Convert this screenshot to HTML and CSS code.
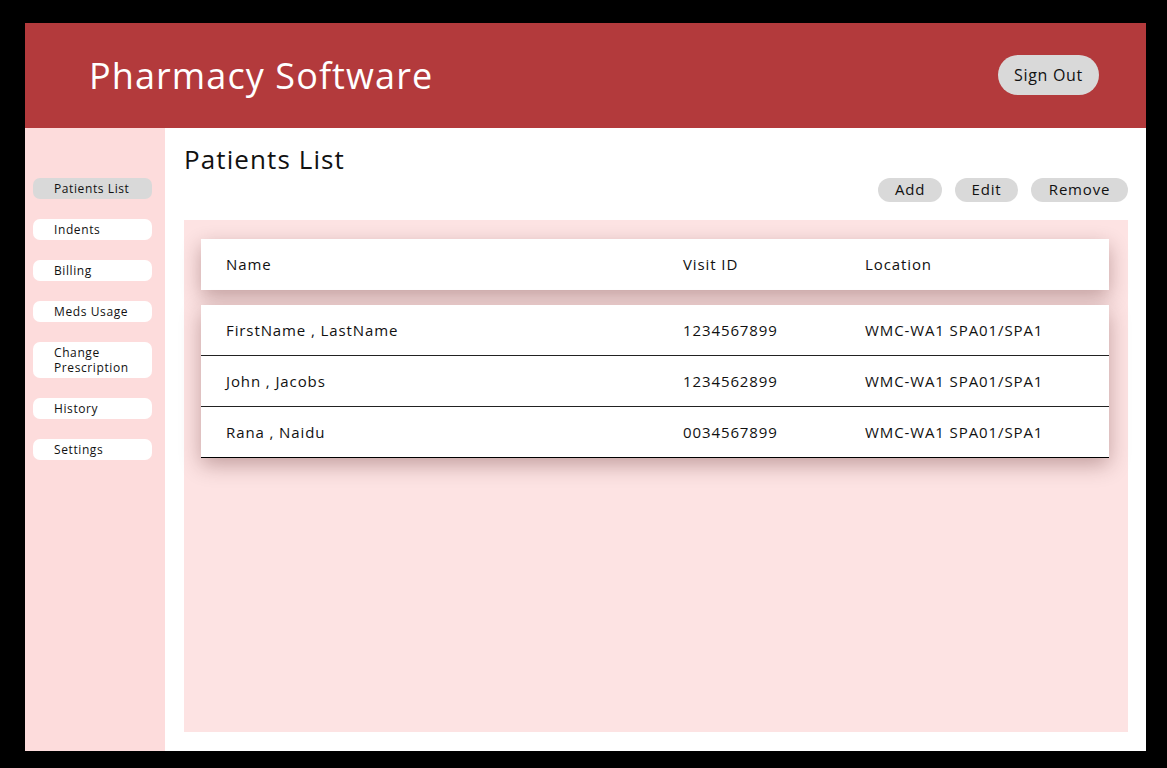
FILE: index.html
```html
<!DOCTYPE html>
<html>
<head>
<meta charset="utf-8">
<link rel="stylesheet" href="styles.css">
</head>
<body>
<div class="app">
  <header class="topbar">
    <h1 class="brand">Pharmacy Software</h1>
    <button class="signout">Sign Out</button>
  </header>
  <div class="body">
    <nav class="sidebar">
      <a class="nav-item active">Patients List</a>
      <a class="nav-item">Indents</a>
      <a class="nav-item">Billing</a>
      <a class="nav-item">Meds Usage</a>
      <a class="nav-item">Change<br>Prescription</a>
      <a class="nav-item">History</a>
      <a class="nav-item">Settings</a>
    </nav>
    <main class="main">
      <h2 class="page-title">Patients List</h2>
      <div class="actions">
        <button class="pill">Add</button>
        <button class="pill">Edit</button>
        <button class="pill">Remove</button>
      </div>
      <section class="panel">
        <div class="card head">
          <div class="row">
            <span>Name</span><span>Visit ID</span><span>Location</span>
          </div>
        </div>
        <div class="card rows">
          <div class="row line">
            <span>FirstName , LastName</span><span>1234567899</span><span>WMC-WA1 SPA01/SPA1</span>
          </div>
          <div class="row line">
            <span>John , Jacobs</span><span>1234562899</span><span>WMC-WA1 SPA01/SPA1</span>
          </div>
          <div class="row line">
            <span>Rana , Naidu</span><span>0034567899</span><span>WMC-WA1 SPA01/SPA1</span>
          </div>
        </div>
      </section>
    </main>
  </div>
</div>
</body>
</html>
```

FILE: styles.css
```css
* { box-sizing: border-box; }
html, body { margin: 0; height: 100%; }
body {
  background: #000;
  padding: 23px 21px 17px 25px;
  font-family: "Open Sans", "Liberation Sans", sans-serif;
  color: #111;
}
.app {
  width: 1121px;
  height: 728px;
  display: flex;
  flex-direction: column;
  background: #fff;
}
.topbar {
  height: 105px;
  flex: none;
  background: #b33a3c;
  display: flex;
  align-items: center;
  justify-content: space-between;
  padding: 0 47px 0 64px;
}
.brand {
  margin: 0;
  font-weight: 400;
  font-size: 36px;
  color: #fff;
  letter-spacing: 1.1px;
}
.signout {
  width: 101px;
  height: 40px;
  border: none;
  border-radius: 20px;
  background: #d9d9d9;
  font-family: inherit;
  font-size: 16px;
  letter-spacing: 0.7px;
  color: #111;
  margin-top: -2px;
}
.body {
  flex: 1;
  display: flex;
  min-height: 0;
}
.sidebar {
  width: 140px;
  flex: none;
  background: #fddcdc;
  padding: 50px 13px 0 8px;
  display: flex;
  flex-direction: column;
  gap: 20px;
}
.nav-item {
  display: block;
  background: #fff;
  border-radius: 7px;
  min-height: 21px;
  padding: 3px 0 3px 21px;
  font-size: 12px;
  line-height: 15px;
  letter-spacing: 0.6px;
  color: #111;
}
.nav-item.active { background: #d9d9d9; }
.main {
  flex: 1;
  display: flex;
  flex-direction: column;
  padding: 17px 18px 19px 19px;
}
.page-title {
  margin: 0;
  font-weight: 400;
  font-size: 26px;
  line-height: 28px;
  letter-spacing: 1.1px;
}
.actions {
  display: flex;
  justify-content: flex-end;
  gap: 13px;
  margin-top: 5px;
}
.pill {
  height: 24px;
  border: none;
  border-radius: 12px;
  background: #d9d9d9;
  font-family: inherit;
  font-size: 15px;
  letter-spacing: 0.8px;
  color: #111;
  padding: 0 0 2px;
}
.pill:nth-child(1) { width: 64px; }
.pill:nth-child(2) { width: 63px; }
.pill:nth-child(3) { width: 97px; }
.panel {
  flex: 1;
  margin-top: 18px;
  background: #fde3e3;
  padding: 19px 19px 0 17px;
}
.card {
  background: #fff;
  box-shadow: 0 7px 20px rgba(60, 0, 0, 0.3);
}
.card.rows { margin-top: 15px; }
.row {
  display: grid;
  grid-template-columns: 457px 182px 1fr;
  align-items: center;
  height: 51px;
  padding-left: 25px;
  padding-bottom: 2px;
  font-size: 15px;
  letter-spacing: 0.9px;
}
.row.line { border-bottom: 1px solid #222; padding-bottom: 0; }
.row.line:last-child { border-bottom-color: #000; }
```
